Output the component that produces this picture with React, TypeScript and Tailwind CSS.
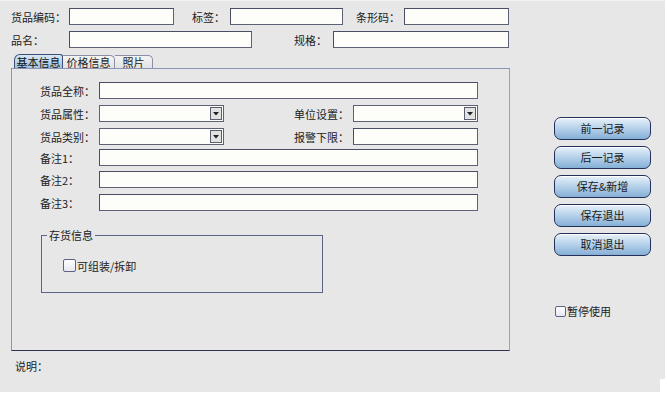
import React from "react";

const FONT = { fontFamily: '"Noto Sans CJK SC", "Noto Sans", sans-serif' };

function Label({ w, children, className = "" }: { w: string; children: React.ReactNode; className?: string }) {
  return <span className={`${w} shrink-0 text-[11px] leading-[12px] text-[#222] whitespace-nowrap ${className}`}>{children}</span>;
}

function Input({ w }: { w: string }) {
  return <div className={`${w} h-full shrink-0 bg-[#fdfdf9] border border-[#5d6176] border-t-[#4a4e64] border-l-[#4a4e64]`} />;
}

function Combo({ w }: { w: string }) {
  return (
    <div className={`${w} h-full shrink-0 bg-[#fdfdf9] border border-[#5d6176] flex items-center justify-end pr-[1px]`}>
      <div className="w-[12px] h-[13px] bg-[#e2e2e2] border border-[#5a5e70] flex items-center justify-center">
        <svg width="6" height="4" viewBox="0 0 6 4">
          <path d="M0 0H6L3 3.5Z" fill="#222" />
        </svg>
      </div>
    </div>
  );
}

function CheckBox({ size }: { size: string }) {
  return <div className={`${size} shrink-0 rounded-[2px] border border-[#5d6286] bg-gradient-to-b from-white to-[#e6e8f0]`} />;
}

function Btn({ children }: { children: React.ReactNode }) {
  return (
    <div className="w-[97px] h-[23px] rounded-[7px] border border-[#23305a] bg-gradient-to-b from-[#e8f1f9] via-[#b5d1ea] to-[#86afd6] flex items-center justify-center text-[11px] text-[#1a1a1a] shadow-[inset_0_1px_0_#ffffff]">
      {children}
    </div>
  );
}

export default function App() {
  return (
    <div className="w-[667px] h-[395px] bg-white relative overflow-hidden" style={FONT}>
      <div className="w-[665px] h-[392px] bg-[#e7e7e7] flex flex-col border-t border-[#f2f2f2]">
        {/* Row 1 */}
        <div className="flex items-center h-[17px] mt-[7px] pl-[11px]">
          <Label w="w-[58px]">货品编码：</Label>
          <Input w="w-[105px]" />
          <Label w="w-[38px]" className="ml-[18px]">标签：</Label>
          <Input w="w-[113px]" />
          <Label w="w-[48px]" className="ml-[13px]">条形码：</Label>
          <Input w="w-[105px]" />
        </div>
        {/* Row 2 */}
        <div className="flex items-center h-[17px] mt-[6px] pl-[11px]">
          <Label w="w-[58px]">品名：</Label>
          <Input w="w-[183px]" />
          <Label w="w-[39px]" className="ml-[42px]">规格：</Label>
          <Input w="w-[176px]" />
        </div>

        {/* Body */}
        <div className="flex mt-[6px]">
          <div className="ml-[11px] w-[499px] flex flex-col">
            {/* Tabs */}
            <div className="flex h-[14px] pl-[3px] items-end">
              <div className="w-[49px] h-[14px] rounded-tl-[6px] rounded-tr-[3px] border border-b-0 border-[#3d4f78] bg-gradient-to-b from-[#d7e7f5] to-[#9ec2e2] flex items-center justify-center text-[11px] leading-[12px] text-[#111]">
                基本信息
              </div>
              <div className="w-[52px] h-[13px] rounded-tr-[5px] border border-b-0 border-l-0 border-[#8a8ea6] bg-gradient-to-b from-[#f4f4f4] to-[#e2e2e2] flex items-center justify-center text-[11px] leading-[12px] text-[#222]">
                价格信息
              </div>
              <div className="w-[38px] h-[13px] rounded-tr-[5px] border border-b-0 border-l-0 border-[#8a8ea6] bg-gradient-to-b from-[#f4f4f4] to-[#e2e2e2] flex items-center justify-center text-[11px] leading-[12px] text-[#222]">
                照片
              </div>
            </div>
            {/* Panel */}
            <div className="h-[283px] border border-[#8e94b4] border-b-[#2f3350] border-r-[#9aa0c0] bg-[#e7e7e7] flex flex-col pt-[13px] pl-[28px]">
              <div className="flex items-center h-[17px]">
                <Label w="w-[59px]">货品全称：</Label>
                <Input w="w-[379px]" />
              </div>
              <div className="flex items-center h-[17px] mt-[6px]">
                <Label w="w-[59px]">货品属性：</Label>
                <Combo w="w-[125px]" />
                <Label w="w-[59px]" className="ml-[70px]">单位设置：</Label>
                <Combo w="w-[125px]" />
              </div>
              <div className="flex items-center h-[17px] mt-[6px]">
                <Label w="w-[59px]">货品类别：</Label>
                <Combo w="w-[125px]" />
                <Label w="w-[59px]" className="ml-[70px]">报警下限：</Label>
                <Input w="w-[125px]" />
              </div>
              <div className="flex items-center h-[17px] mt-[4px]">
                <Label w="w-[59px]">备注1：</Label>
                <Input w="w-[379px]" />
              </div>
              <div className="flex items-center h-[17px] mt-[5px]">
                <Label w="w-[59px]">备注2：</Label>
                <Input w="w-[379px]" />
              </div>
              <div className="flex items-center h-[17px] mt-[6px]">
                <Label w="w-[59px]">备注3：</Label>
                <Input w="w-[379px]" />
              </div>
              {/* Group box */}
              <div className="relative ml-[1px] mt-[24px] w-[282px] h-[58px] border border-[#5e6384] pl-[21px] pt-[23px]">
                <span className="absolute -top-[7px] left-[5px] px-[2px] bg-[#e7e7e7] text-[11px] leading-[12px] text-[#222]">存货信息</span>
                <div className="flex items-center gap-[1px]">
                  <CheckBox size="w-[13px] h-[13px]" />
                  <span className="text-[11px] leading-[12px] text-[#222]">可组装/拆卸</span>
                </div>
              </div>
            </div>
          </div>

          {/* Right column */}
          <div className="ml-[44px] mt-[63px] flex flex-col gap-[6px]">
            <Btn>前一记录</Btn>
            <Btn>后一记录</Btn>
            <Btn>保存&amp;新增</Btn>
            <Btn>保存退出</Btn>
            <Btn>取消退出</Btn>
            <div className="flex items-center gap-[1px] mt-[43px] ml-[1px]">
              <CheckBox size="w-[11px] h-[11px]" />
              <span className="text-[11px] leading-[12px] text-[#222]">暂停使用</span>
            </div>
          </div>
        </div>

        <div className="mt-[9px] pl-[15px] text-[11px] leading-[12px] text-[#222]">说明：</div>
      </div>
      <div className="absolute right-0 bottom-0 w-[7px] h-[16px] bg-white" />
    </div>
  );
}
